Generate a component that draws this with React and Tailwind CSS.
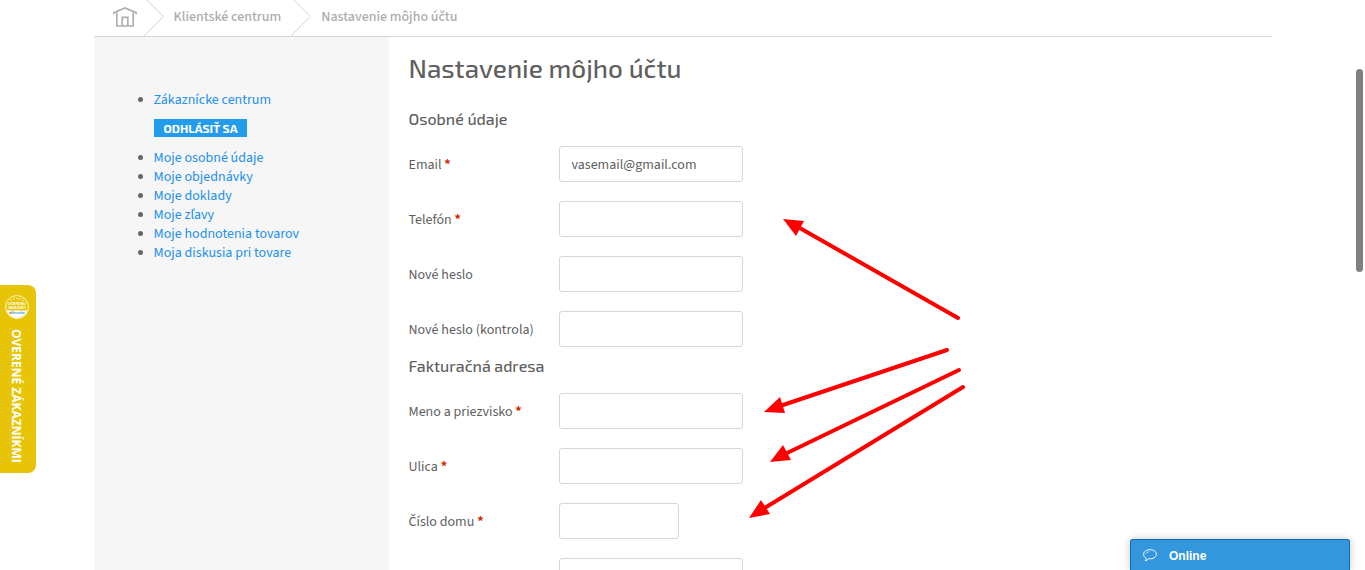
import React from 'react';

const menuItems = [
    'Moje osobné údaje',
    'Moje objednávky',
    'Moje doklady',
    'Moje zľavy',
    'Moje hodnotenia tovarov',
    'Moja diskusia pri tovare',
];

const personalFields = [
    { id: 'email', label: 'Email', type: 'email', required: true, value: 'vasemail@gmail.com' },
    { id: 'phone', label: 'Telefón', type: 'tel', required: true },
    { id: 'password', label: 'Nové heslo', type: 'password' },
    { id: 'password-check', label: 'Nové heslo (kontrola)', type: 'password' },
];

const billingFields = [
    { id: 'name', label: 'Meno a priezvisko', required: true },
    { id: 'street', label: 'Ulica', required: true },
    { id: 'house-number', label: 'Číslo domu', required: true, short: true },
    { id: 'city', ariaLabel: 'Mesto' },
];

const arrows = [
    { line: 'M958 318L798 227', head: '783,219 804,221 796,236' },
    { line: 'M947 350L780 406', head: '764,412 780,397 785,413' },
    { line: 'M959 370L785 454', head: '770,462 783,445 791,460' },
    { line: 'M963 387L763 509', head: '749,518 761,500 770,514' },
];

function HomeIcon() {
    return (
        <svg width="24" height="20" viewBox="0 0 24 20" fill="none" stroke="#b0b0b0" strokeWidth="1.7">
            <path d="M.8 7.2V5.6L12 1l11.2 4.6v1.6" />
            <path d="M3.8 5.5V19h16.4V5.5" />
            <path d="M9.2 19v-8.7h5.6V19" />
        </svg>
    );
}

function Separator() {
    return (
        <svg className="shrink-0" width="22" height="36" viewBox="0 0 22 36" fill="none" stroke="#d6d6d6">
            <path d="M3 -1L20.5 16.5L1 36" />
        </svg>
    );
}

function Breadcrumbs() {
    return (
        <nav className="flex h-[37px] items-center border-b border-[#d6d6d6] pl-[19px] font-medium text-[#acacac]">
            <a href="#home" aria-label="Domov" className="mr-1.5 mb-0.5">
                <HomeIcon />
            </a>
            <Separator />
            <a href="#centrum" className="mx-[9px] mb-0.5">Klientské centrum</a>
            <Separator />
            <span className="mx-[9px] mb-0.5">Nastavenie môjho účtu</span>
        </nav>
    );
}

function Sidebar() {
    return (
        <aside className="w-[295px] shrink-0 bg-[#f6f6f6] pt-[54px] pl-[60px]">
            <ul className="list-disc leading-[19px] marker:text-[#666]">
                <li>
                    <a href="#centrum" className="text-[#2391e9]">Zákaznícke centrum</a>
                </li>
            </ul>
            <button type="button" className="mt-[9px] mb-3 block h-[18px] bg-[#239ceb] px-2.5 font-['Exo_2','Roboto',sans-serif] text-xs leading-[18px] font-bold text-white">
                ODHLÁSIŤ SA
            </button>
            <ul className="list-disc leading-[19px] marker:text-[#666]">
                {menuItems.map((item) => (
                    <li key={item}>
                        <a href="#menu" className="text-[#2391e9]">{item}</a>
                    </li>
                ))}
            </ul>
        </aside>
    );
}

function Field({ field }) {
    return (
        <div className="mb-[19px] flex h-9 items-center">
            <label htmlFor={field.id} className="w-[150px] shrink-0 pt-0.5">
                {field.label}
                {field.required && <span className="font-bold text-[#d52a00]"> *</span>}
            </label>
            <input
                id={field.id}
                type={field.type || 'text'}
                aria-label={field.ariaLabel}
                defaultValue={field.value}
                className={`h-9 rounded-[3px] border border-[#d6d6d6] bg-white px-3 pt-0.5 ${field.short ? 'w-[120px]' : 'w-[184px]'}`}
            />
        </div>
    );
}

function Section({ title, fields }) {
    return (
        <section>
            <h2 className="mt-[-12px] mb-[15px] font-['Exo_2','Roboto',sans-serif] text-base leading-6 font-medium">{title}</h2>
            {fields.map((field) => (
                <Field key={field.id} field={field} />
            ))}
        </section>
    );
}

function ReviewBadge() {
    return (
        <a href="#recenzie" className="absolute top-[285px] left-0 flex h-[188px] w-9 flex-col items-center rounded-r-lg bg-[#e8c406] pt-2.5 pr-0.5 text-white">
            <svg className="shrink-0 font-['Liberation_Sans',sans-serif]" width="24" height="24" viewBox="0 0 24 24">
                <circle cx="12" cy="12" r="11.5" fill="#e8c406" stroke="#fff" strokeWidth=".8" />
                <path d="M1.5 15.5h21a11 11 0 0 1-21 0z" fill="#fff" />
                <path d="M5.5 5h1.4M8.3 3.8h1.4M11.3 3.3h1.4M14.3 3.8h1.4M17.1 5h1.4" stroke="#fff" strokeWidth="1.2" />
                <text x="12" y="9.6" textAnchor="middle" fontSize="3.7" fontWeight="700" fill="#fff">OVERENO</text>
                <text x="12" y="14.2" textAnchor="middle" fontSize="3.2" fontWeight="700" fill="#fff">ZÁKAZNÍKY</text>
                <circle cx="5.5" cy="18" r="1.2" fill="#f08a24" />
                <text x="13" y="19.4" textAnchor="middle" fontSize="3.4" fontWeight="700" fill="#3a9bd8">Heureka</text>
            </svg>
            <span className="mt-2.5 mr-0.5 font-['Open_Sans',sans-serif] text-xs font-bold whitespace-nowrap [writing-mode:vertical-rl]">
                OVERENÉ ZÁKAZNÍKMI
            </span>
        </a>
    );
}

function ChatBar() {
    return (
        <button type="button" className="absolute right-[15px] bottom-0 flex h-[31px] w-[220px] items-center rounded-t-[3px] border border-b-0 border-[#0f6cad] bg-[#3497dd] pt-0.5 pl-3 font-['Liberation_Sans',sans-serif] text-xs font-bold text-white shadow-[0_0_8px_rgba(0,0,0,0.2)]">
            <svg className="mr-3 mb-0.5" width="14" height="13" viewBox="0 0 14 13" fill="none" stroke="#fff" strokeLinejoin="round">
                <path d="M7 .7C3.4.7.6 2.7.6 5.3c0 1.7 1 3.1 2.7 3.9-.1 1-.5 1.900-1.100 2.700 1.500-.4 2.700-1.200 3.400-2.100 4.400.4 7.800-1.600 7.800-4.500C13.400 2.700 10.600.7 7 .7z" />
                <path d="M3 4.800c.3-1 1.300-1.800 2.800-2" strokeWidth=".7" />
            </svg>
            Online
        </button>
    );
}

export default function App() {
    return (
        <div className="relative flex h-screen flex-col overflow-hidden bg-white font-['Source_Sans_Pro','Source_Sans_3','Noto_Sans',sans-serif] text-sm leading-[19px] text-[#5f5f5f]">
            <div className="mx-auto flex w-full max-w-[1178px] grow flex-col">
                <Breadcrumbs />
                <div className="flex grow">
                    <Sidebar />
                    <main className="h-0 grow pt-[15px] pl-5">
                        <h1 className="mb-[35px] font-['Exo_2','Roboto',sans-serif] text-[26px] leading-8 font-medium">Nastavenie môjho účtu</h1>
                        <form>
                            <Section title="Osobné údaje" fields={personalFields} />
                            <Section title="Fakturačná adresa" fields={billingFields} />
                        </form>
                    </main>
                </div>
            </div>
            <svg className="pointer-events-none absolute top-0 left-0" width="1365" height="570" fill="#f00" stroke="#f00">
                {arrows.map((arrow) => (
                    <g key={arrow.line}>
                        <path d={arrow.line} strokeWidth="4" strokeLinecap="round" />
                        <polygon points={arrow.head} stroke="none" />
                    </g>
                ))}
            </svg>
            <ReviewBadge />
            <ChatBar />
            <div className="absolute top-[69px] right-0.5 h-[203px] w-[7px] rounded-full bg-[#808080]" />
        </div>
    );
}
